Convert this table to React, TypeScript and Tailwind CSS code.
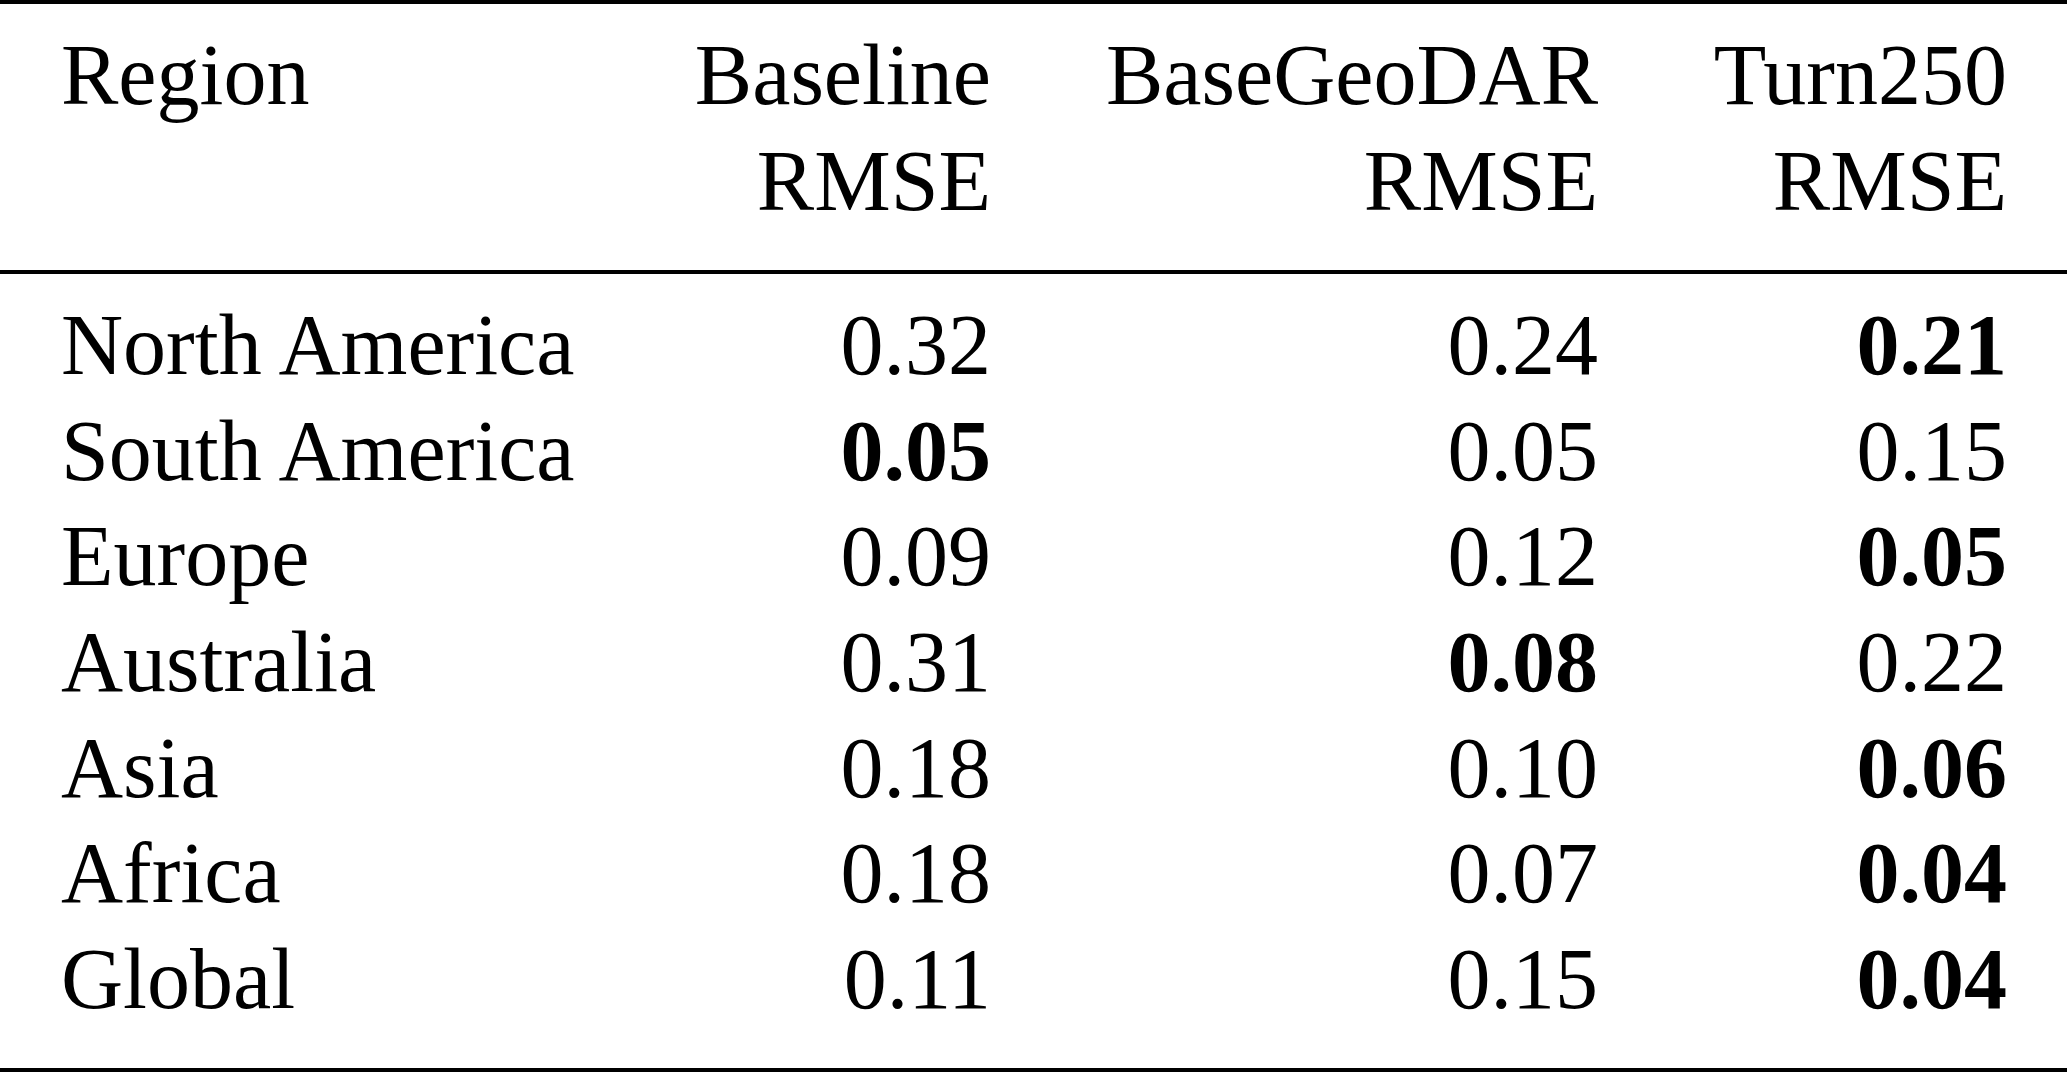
const rows = [
  { region: "North America", baseline: "0.32", geodar: "0.24", turn: "0.21", best: "turn" },
  { region: "South America", baseline: "0.05", geodar: "0.05", turn: "0.15", best: "baseline" },
  { region: "Europe", baseline: "0.09", geodar: "0.12", turn: "0.05", best: "turn" },
  { region: "Australia", baseline: "0.31", geodar: "0.08", turn: "0.22", best: "geodar" },
  { region: "Asia", baseline: "0.18", geodar: "0.10", turn: "0.06", best: "turn" },
  { region: "Africa", baseline: "0.18", geodar: "0.07", turn: "0.04", best: "turn" },
  { region: "Global", baseline: "0.11", geodar: "0.15", turn: "0.04", best: "turn" },
];

const cols = "grid grid-cols-[330px_600px_607px_409px] pl-[61px] pr-[60px]";

export default function App() {
  return (
    <div
      className="w-full min-h-[1073px] bg-white text-black text-[86px] leading-[105.6px]"
      style={{ fontFamily: '"Liberation Serif", "Times New Roman", serif' }}
    >
      <div className="h-[4px] bg-black" />

      {/* header */}
      <div className={`${cols} pt-[19px] pb-[36px]`}>
        <div className="text-left">Region</div>
        <div className="text-right">
          Baseline
          <br />
          RMSE
        </div>
        <div className="text-right">
          BaseGeoDAR
          <br />
          RMSE
        </div>
        <div className="text-right">
          Turn250
          <br />
          RMSE
        </div>
      </div>

      <div className="h-[4px] bg-black" />

      {/* body */}
      <div className={`${cols} pt-[19px] pb-[36px]`}>
        {rows.map((r) => (
          <div key={r.region} className="contents">
            <div className="text-left whitespace-nowrap">{r.region}</div>
            <div className={`text-right ${r.best === "baseline" ? "font-bold" : ""}`}>
              {r.baseline}
            </div>
            <div className={`text-right ${r.best === "geodar" ? "font-bold" : ""}`}>
              {r.geodar}
            </div>
            <div className={`text-right ${r.best === "turn" ? "font-bold" : ""}`}>
              {r.turn}
            </div>
          </div>
        ))}
      </div>

      <div className="h-[4px] bg-black" />
    </div>
  );
}
